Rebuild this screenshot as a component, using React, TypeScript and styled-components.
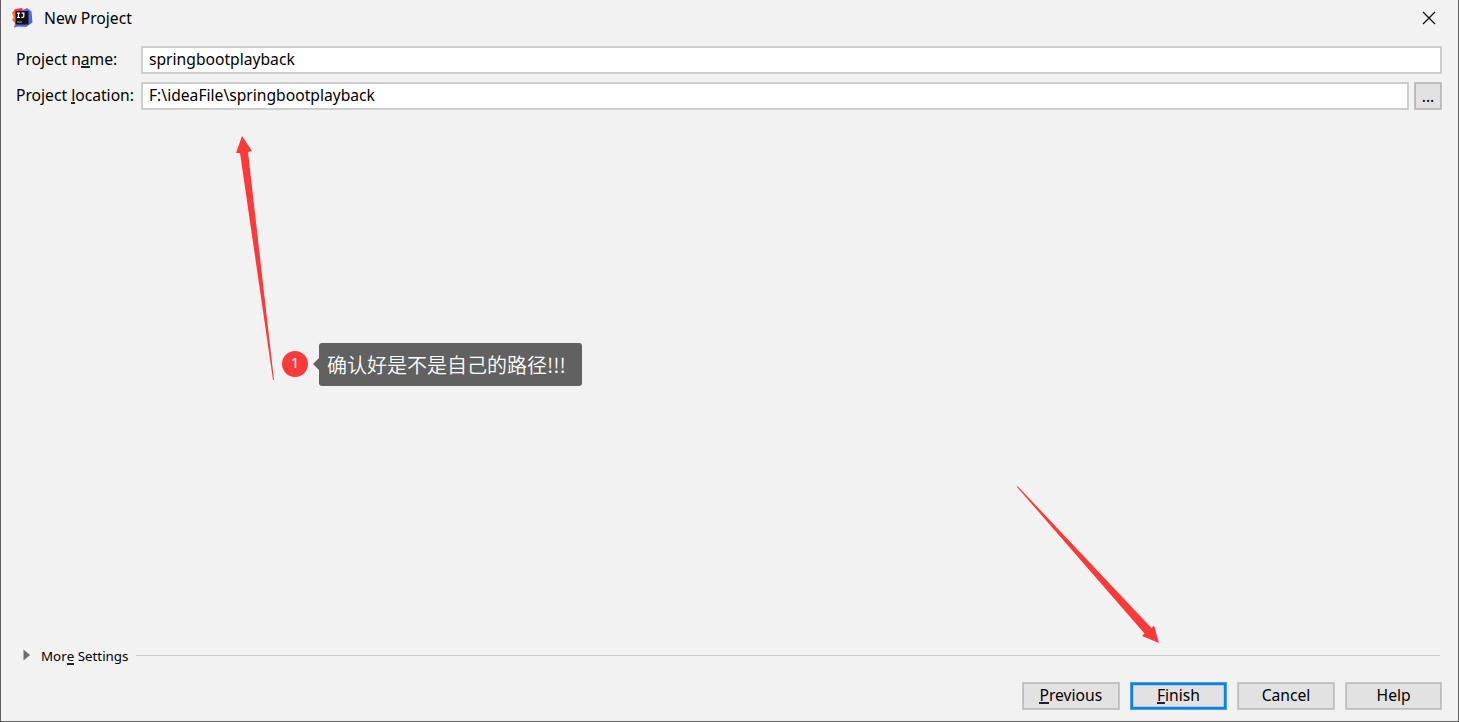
import type { ReactNode } from "react";
import styled, { createGlobalStyle } from "styled-components";

const GlobalStyle = createGlobalStyle`
    * {
        box-sizing: border-box;
    }
    body {
        margin: 0;
        overflow: hidden;
        background: #f2f2f2;
    }
`

const Dialog = styled.div`
    position: relative;
    width: 100vw;
    height: 100vh;
    display: flex;
    flex-direction: column;
    background: #f2f2f2;
    border: 1px solid #626262;
    border-top: none;
    font-family: "Noto Sans", "Noto Sans CJK SC", sans-serif;
    font-size: 15.65px;
    line-height: 20px;
    color: #000;
`

const TitleBar = styled.header`
    height: 36px;
    display: flex;
    align-items: center;
    padding: 0 22px 0 10px;
`

const Title = styled.h1`
    flex: 1;
    margin: 0 0 0 11px;
    padding-bottom: 1px;
    font-size: 15.65px;
    font-weight: 400;
`

const CloseButton = styled.button`
    display: flex;
    padding: 0;
    border: none;
    background: none;
`

const Form = styled.div`
    display: flex;
    flex-direction: column;
    gap: 8px;
    padding: 10px 16px 0 15px;
`

const Row = styled.div`
    height: 28px;
    display: flex;
    align-items: center;
`

const Label = styled.label`
    width: 125px;
    white-space: nowrap;
    padding-bottom: 2px;
`

const Field = styled.div`
    flex: 1;
    height: 28px;
    padding: 2px 7px;
    background: #fff;
    border: 1px solid #cfcfcf;
    box-shadow: inset 0 0 0 1px #cbcbcb;
`

const BrowseButton = styled.button`
    width: 28px;
    height: 28px;
    margin-left: 5px;
    padding: 0;
    border: 1px solid #c4c4c4;
    box-shadow: inset 0 0 0 1px #b8b8b8;
    background: #e2e2e2;
    color: #000;
    font: inherit;
`

const Mnemonic = styled.span`
    display: inline-block;
    height: 19px;
    border-bottom: 2px solid #222;
    vertical-align: top;
`

const Spacer = styled.div`
    flex: 1;
`

const MoreSettings = styled.div`
    height: 20px;
    display: flex;
    align-items: center;
    padding: 0 18px 0 22px;
    font-size: 13.35px;
`

const MoreText = styled.span`
    margin: 2px 8px 0 11px;
`

const Divider = styled.div`
    flex: 1;
    height: 1px;
    background: #cbcbcb;
`

const Footer = styled.footer`
    display: flex;
    justify-content: flex-end;
    gap: 10px;
    padding: 17px 15.6px 11px;
`

const Button = styled.button<{ $primary?: boolean }>`
    width: 97.6px;
    height: 28px;
    padding: 0 0 2px;
    color: #000;
    background: #e2e2e2;
    border: 1px solid ${({ $primary }) => ($primary ? "#4a9fe0" : "#c8c8c8")};
    box-shadow: ${({ $primary }) =>
        $primary ? "inset 0 0 0 2px #0a84e0, inset 0 0 0 3px #b3cde4" : "inset 0 0 0 1px #bcbcbc"};
    font: inherit;
    line-height: 20px;
`

const Arrows = styled.svg`
    position: absolute;
    left: 0;
    top: 0;
    pointer-events: none;
`

const Callout = styled.div`
    position: absolute;
    left: 281px;
    top: 343px;
    display: flex;
    align-items: center;
`

const Badge = styled.div`
    width: 26px;
    height: 26px;
    margin-top: -1px;
    border-radius: 50%;
    background: #fc3a3a;
    color: #fff;
    font-size: 15px;
    line-height: 23px;
    text-align: center;
`

const Pointer = styled.div`
    margin: -1px 0 0 5px;
    border: 6px solid transparent;
    border-left: none;
    border-right-color: #616161;
`

const Bubble = styled.div`
    width: 263px;
    height: 43px;
    padding-left: 8px;
    border-radius: 3px;
    background: #616161;
    color: #fff;
    font-family: "Noto Sans CJK SC", sans-serif;
    font-weight: 350;
    font-size: 20px;
    line-height: 43px;
    white-space: nowrap;
`

const IdeaLogo = () => (
    <svg width="22" height="22" viewBox="0 0 22 22">
        <defs>
            <linearGradient id="warm" x1="0" y1="1" x2="1" y2="0">
                <stop offset="0" stopColor="#b74af7" />
                <stop offset="0.35" stopColor="#fc801d" />
                <stop offset="0.7" stopColor="#fe2857" />
            </linearGradient>
            <linearGradient id="cool" x1="0" y1="0" x2="1" y2="1">
                <stop offset="0" stopColor="#b85bc8" />
                <stop offset="0.5" stopColor="#4b66f0" />
                <stop offset="1" stopColor="#4a6fe0" />
            </linearGradient>
        </defs>
        <path d="M4 2L11 1L13 6L8 18L3 20.5L4 16L1 13L2.5 10L1 6Z" fill="url(#warm)" />
        <path d="M12 3L16 1L20.5 4.5L21.5 15.5L15 20L7 19.5L3 20.5L7 15Z" fill="url(#cool)" />
        <rect x="4.5" y="4" width="13" height="13.5" fill="#141114" />
        <path d="M6 6.2h3M7.5 6.2v4.3M6 10.5h3M10.5 6.2h3M12.8 6.2v3q0 1.4-2.5 1.1" fill="none" stroke="#fff" strokeWidth="1.2" />
        <path d="M6 15h5" stroke="#aaa" strokeWidth="1" />
    </svg>
)

const CloseIcon = () => (
    <svg width="14" height="14" viewBox="0 0 14 14">
        <path d="M1 1L13 13M13 1L1 13" stroke="#111" strokeWidth="1.3" />
    </svg>
)

const FormRow = ({ label, value, children }: { label: ReactNode; value: string; children?: ReactNode }) => (
    <Row>
        <Label>{label}</Label>
        <Field>{value}</Field>
        {children}
    </Row>
)

export default function App() {
    return (
        <>
            <GlobalStyle />
            <Dialog>
                <TitleBar>
                    <IdeaLogo />
                    <Title>New Project</Title>
                    <CloseButton><CloseIcon /></CloseButton>
                </TitleBar>
                <Form>
                    <FormRow label={<>Project n<Mnemonic>a</Mnemonic>me:</>} value="springbootplayback" />
                    <FormRow label={<>Project <Mnemonic>l</Mnemonic>ocation:</>} value="F:\ideaFile\springbootplayback">
                        <BrowseButton>...</BrowseButton>
                    </FormRow>
                </Form>
                <Spacer />
                <MoreSettings>
                    <svg width="7" height="12" viewBox="0 0 7 12">
                        <path d="M0.5 0.5L7 6L0.5 11.5Z" fill="#6e6e6e" />
                    </svg>
                    <MoreText>Mor<Mnemonic>e</Mnemonic> Settings</MoreText>
                    <Divider />
                </MoreSettings>
                <Footer>
                    <Button><Mnemonic>P</Mnemonic>revious</Button>
                    <Button $primary><Mnemonic>F</Mnemonic>inish</Button>
                    <Button>Cancel</Button>
                    <Button>Help</Button>
                </Footer>
                <Arrows width="1457" height="721" viewBox="1 0 1457 721">
                    <path d="M242 136L252 151L248 152L274 380L273 380L240 153L236 153Z" fill="#fc3a3a" />
                    <path d="M1017.5 486L1151.5 628L1154 625.5L1159 643L1142 636L1144.5 633.5L1017 487Z" fill="#fc3a3a" />
                </Arrows>
                <Callout>
                    <Badge>1</Badge>
                    <Pointer />
                    <Bubble>确认好是不是自己的路径!!!</Bubble>
                </Callout>
            </Dialog>
        </>
    )
}
